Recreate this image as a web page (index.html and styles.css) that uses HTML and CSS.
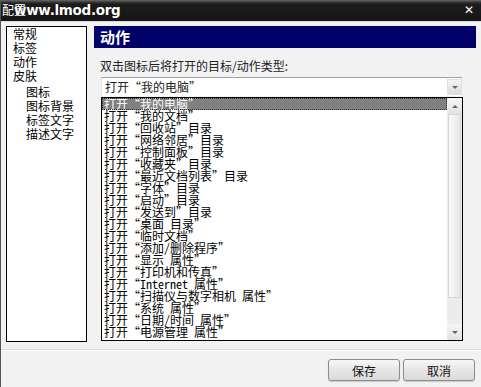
FILE: index.html
```html
<!DOCTYPE html>
<html>
<head>
    <meta charset="utf-8">
    <title>配置</title>
    <link rel="stylesheet" href="styles.css">
</head>
<body>
<div class="window">
    <div class="titlebar">
        <span class="title">配置</span>
        <span class="watermark">www.lmod.org</span>
        <span class="close">&#10005;</span>
    </div>

    <div class="main">
        <ul class="tree">
            <li>常规</li>
            <li>标签</li>
            <li>动作</li>
            <li>皮肤</li>
            <li class="sub">图标</li>
            <li class="sub">图标背景</li>
            <li class="sub">标签文字</li>
            <li class="sub">描述文字</li>
        </ul>

        <div class="pane">
            <div class="header">动作</div>
            <div class="label">双击图标后将打开的目标/动作类型:</div>

            <div class="combo">
                <span class="combo-text">打开“我的电脑”</span>
                <span class="combo-btn"><span class="tri-down"></span></span>
            </div>

            <div class="list">
                <ul class="items">
                    <li class="selected">打开“我的电脑”</li>
                    <li>打开“我的文档”</li>
                    <li>打开“回收站”目录</li>
                    <li>打开“网络邻居”目录</li>
                    <li>打开“控制面板”目录</li>
                    <li>打开“收藏夹”目录</li>
                    <li>打开“最近文档列表”目录</li>
                    <li>打开“字体”目录</li>
                    <li>打开“启动”目录</li>
                    <li>打开“发送到”目录</li>
                    <li>打开“桌面<span class="lat"> </span>目录”</li>
                    <li>打开“临时文档”</li>
                    <li>打开“添加<span class="lat">/</span>删除程序”</li>
                    <li>打开“显示<span class="lat"> </span>属性”</li>
                    <li>打开“打印机和传真”</li>
                    <li>打开“<span class="lat">Internet </span>属性”</li>
                    <li>打开“扫描仪与数字相机<span class="lat"> </span>属性”</li>
                    <li>打开“系统<span class="lat"> </span>属性”</li>
                    <li>打开“日期<span class="lat">/</span>时间<span class="lat"> </span>属性”</li>
                    <li>打开“电源管理<span class="lat"> </span>属性”</li>
                </ul>
                <div class="scrollbar">
                    <div class="sb-btn"><span class="tri-up"></span></div>
                    <div class="sb-thumb"></div>
                    <div class="sb-track"></div>
                    <div class="sb-btn"><span class="tri-down"></span></div>
                </div>
            </div>
        </div>
    </div>

    <div class="footer">
        <button class="btn">保存</button>
        <button class="btn">取消</button>
    </div>
</div>
</body>
</html>
```

FILE: styles.css
```css
body{
    margin: 0;
    background-color: #f2f2f2;
    font-family: "Noto Sans CJK SC", "Liberation Sans", sans-serif;
    font-size: 12px;
    color: #000;
}

.window{
    width: 481px;
    height: 387px;
    display: flex;
    flex-direction: column;
    border-left: 1px solid #555;
    box-sizing: border-box;
}

.titlebar{
    position: relative;
    height: 21px;
    flex: none;
    background: linear-gradient(#6b6b6b 0, #3a3a3a 2px, #1c1c1c 4px, #161616 100%);
    border-bottom: 1px solid #d8dbe6;
    color: #fff;
}

.title{
    position: absolute;
    left: 1px;
    top: 3px;
    font-size: 12px;
    line-height: 14px;
}

.watermark{
    position: absolute;
    left: 13px;
    top: 2px;
    font-family: "DejaVu Sans", sans-serif;
    font-weight: bold;
    font-size: 13.5px;
    line-height: 16px;
    letter-spacing: -0.3px;
    text-shadow: 0 0 1px #000;
}

.close{
    position: absolute;
    right: 7px;
    top: 3px;
    font-family: "DejaVu Sans", sans-serif;
    font-weight: bold;
    font-size: 12px;
    line-height: 14px;
}

.main{
    display: flex;
    padding: 4px 0 0 5px;
    height: 321px;
    flex: none;
}

.tree{
    list-style: none;
    margin: 0;
    padding: 0 0 0 6px;
    width: 81px;
    height: 316px;
    box-sizing: border-box;
    background-color: #fff;
    border: 1px solid #000;
    line-height: 14px;
}

.tree li{
    height: 14px;
}

.tree .sub{
    padding-left: 13px;
}

.tree li:nth-child(5){
    margin-top: 2px;
}

.pane{
    margin-left: 7px;
    width: 382px;
    display: flex;
    flex-direction: column;
}

.header{
    height: 22px;
    background-color: #000068;
    color: #fff;
    font-weight: bold;
    font-size: 15px;
    line-height: 22px;
    padding-left: 6px;
}

.label{
    margin-top: 11px;
    padding-left: 6px;
    color: #222;
    line-height: 14px;
}

.combo{
    margin: 4px 0 0 7px;
    width: 361px;
    height: 19px;
    box-sizing: border-box;
    background-color: #fff;
    border-top: 1px solid #a0a0a0;
    border-left: 1px solid #e4e4e4;
    display: flex;
    align-items: center;
    justify-content: space-between;
}

.combo-text{
    padding-left: 3px;
    color: #222;
    line-height: 14px;
    font-feature-settings: "fwid";
}

.combo-btn{
    width: 15px;
    height: 16px;
    background: linear-gradient(#f4f4f4, #dcdcdc);
    border: 1px solid #e0e0e0;
    box-sizing: border-box;
    display: flex;
    align-items: center;
    justify-content: center;
}

.tri-down{
    width: 0;
    height: 0;
    border-left: 3px solid transparent;
    border-right: 3px solid transparent;
    border-top: 3px solid #666;
}

.tri-up{
    width: 0;
    height: 0;
    border-left: 3px solid transparent;
    border-right: 3px solid transparent;
    border-bottom: 3px solid #666;
}

.list{
    margin: 1px 0 0 7px;
    width: 362px;
    height: 244px;
    box-sizing: border-box;
    border: 1px solid #000;
    background-color: #fff;
    display: flex;
}

.items{
    list-style: none;
    margin: 0;
    padding: 0;
    flex: 1;
    line-height: 12px;
}

.items li{
    height: 12px;
    padding-left: 2px;
    white-space: pre;
    font-feature-settings: "fwid";
}

.items .lat{
    font-feature-settings: "hwid";
}

.items .selected{
    background-color: #808080;
    color: #fff;
    outline: 1px dotted #333;
    outline-offset: -1px;
}

.scrollbar{
    width: 15px;
    display: flex;
    flex-direction: column;
    background-color: #ececec;
}

.sb-btn{
    height: 16px;
    background: linear-gradient(#f6f6f6, #e2e2e2);
    display: flex;
    align-items: center;
    justify-content: center;
}

.sb-thumb{
    height: 182px;
    margin: 0 1px;
    background: linear-gradient(90deg, #f8f8f8, #e8e8e8);
    border: 1px solid #d6d6d6;
}

.sb-track{
    flex: 1;
}

.footer{
    margin-top: 2px;
    border-top: 1px solid #dcdcdc;
    box-shadow: inset 0 1px 0 #fff;
    flex: 1;
    display: flex;
    justify-content: flex-end;
    align-items: flex-start;
    gap: 3px;
    padding: 9px 6px 0 0;
}

.btn{
    width: 72px;
    height: 22px;
    font-family: "Noto Sans CJK SC", sans-serif;
    font-size: 12px;
    color: #111;
    background: linear-gradient(#f8f8f8, #e6e6e6 50%, #dadada);
    border: 1px solid #8c8c8c;
    border-radius: 3px;
    box-shadow: 0 1px 1px #c8c8c8;
    padding: 0;
}
```
